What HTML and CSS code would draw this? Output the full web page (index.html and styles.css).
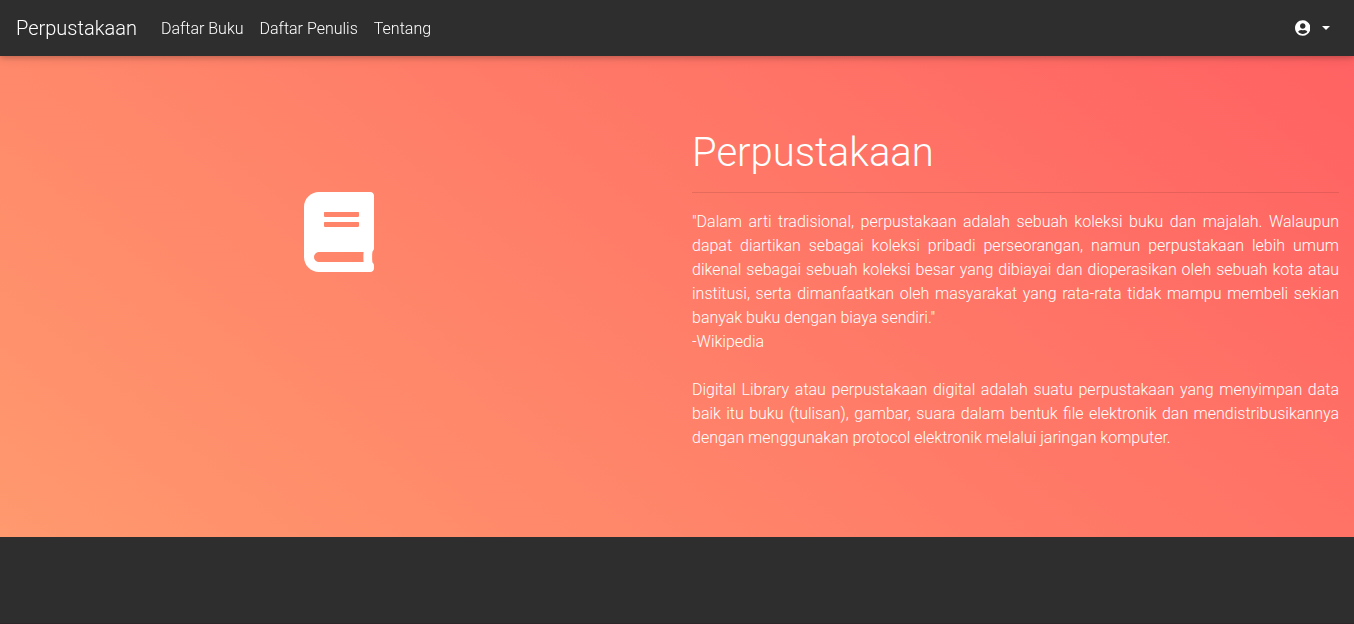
FILE: index.html
```html
<!DOCTYPE html>
<html lang="id">
<head>
<meta charset="utf-8">
<title>Perpustakaan</title>
<link rel="stylesheet" href="styles.css">
</head>
<body>
<nav class="navbar">
  <a class="brand" href="#">Perpustakaan</a>
  <div class="nav-links">
    <a class="nav-link" href="#">Daftar Buku</a>
    <a class="nav-link" href="#">Daftar Penulis</a>
    <a class="nav-link" href="#">Tentang</a>
  </div>
  <button class="account" type="button" aria-label="Akun">
    <svg class="user-icon" viewBox="0 0 496 512" aria-hidden="true"><path fill="currentColor" d="M248 8C111 8 0 119 0 256s111 248 248 248 248-111 248-248S385 8 248 8zm0 96c48.600 0 88 39.400 88 88s-39.400 88-88 88-88-39.400-88-88 39.400-88 88-88zm0 344c-58.700 0-111.300-26.600-146.500-68.200 18.800-35.400 55.600-59.800 98.500-59.800 2.400 0 4.800.4 7.100 1.100 13 4.200 26.600 6.900 40.900 6.900 14.300 0 28-2.700 40.900-6.900 2.300-.7 4.700-1.100 7.100-1.100 42.900 0 79.700 24.400 98.500 59.800C359.300 421.400 306.700 448 248 448z"/></svg>
    <span class="caret"></span>
  </button>
</nav>
<main class="hero">
  <div class="hero-art">
    <svg class="book-icon" viewBox="0 0 448 512" aria-hidden="true"><path fill="currentColor" d="M448 360V24c0-13.300-10.700-24-24-24H96C43 0 0 43 0 96v320c0 53 43 96 96 96h328c13.300 0 24-10.700 24-24v-16c0-7.500-3.500-14.300-8.900-18.700-4.200-15.400-4.200-59.300 0-74.700 5.400-4.300 8.900-11.100 8.900-18.600zM128 134c0-3.300 2.700-6 6-6h212c3.300 0 6 2.700 6 6v20c0 3.300-2.700 6-6 6H134c-3.300 0-6-2.700-6-6v-20zm0 64c0-3.300 2.700-6 6-6h212c3.300 0 6 2.700 6 6v20c0 3.300-2.700 6-6 6H134c-3.300 0-6-2.700-6-6v-20zm253.400 250H96c-17.700 0-32-14.300-32-32 0-17.600 14.400-32 32-32h285.400c-1.900 17.100-1.900 46.900 0 64z"/></svg>
  </div>
  <section class="hero-text">
    <h1 class="title">Perpustakaan</h1>
    <hr class="rule">
    <p class="copy">"Dalam arti tradisional, perpustakaan adalah sebuah koleksi buku dan majalah. Walaupun dapat diartikan sebagai koleksi pribadi perseorangan, namun perpustakaan lebih umum dikenal sebagai sebuah koleksi besar yang dibiayai dan dioperasikan oleh sebuah kota atau institusi, serta dimanfaatkan oleh masyarakat yang rata-rata tidak mampu membeli sekian banyak buku dengan biaya sendiri."<br>-Wikipedia<br><br>Digital Library atau perpustakaan digital adalah suatu perpustakaan yang menyimpan data baik itu buku (tulisan), gambar, suara dalam bentuk file elektronik dan mendistribusikannya dengan menggunakan protocol elektronik melalui jaringan komputer.</p>
  </section>
</main>
<footer class="footer"></footer>
</body>
</html>
```
FILE: styles.css
```css
* { box-sizing: border-box; }

body {
  display: flex;
  flex-direction: column;
  min-height: 100vh;
  margin: 0;
  background: #2e2e2e;
  color: #fff;
  font-family: Roboto, sans-serif;
  font-size: 16px;
  font-weight: 300;
  line-height: 24px;
}

.navbar {
  position: fixed;
  top: 0;
  right: 0;
  left: 0;
  display: flex;
  align-items: center;
  padding: 8px 16px;
  background: #2e2e2e;
  box-shadow: 0 2px 5px 0 rgba(0, 0, 0, .16), 0 2px 10px 0 rgba(0, 0, 0, .12);
}

.brand,
.nav-link {
  color: inherit;
  text-decoration: none;
}

.brand {
  margin-right: 16px;
  padding: 4px 0;
  font-size: 20px;
  line-height: 32px;
}

.nav-links { display: flex; }

.nav-link { padding: 9px 8px 7px; }

.account {
  display: flex;
  align-items: center;
  gap: 12px;
  margin-left: auto;
  padding: 8px;
  border: 0;
  background: none;
  color: inherit;
}

.user-icon {
  display: block;
  height: 16px;
}

.caret {
  border: 4px solid transparent;
  border-top-color: currentColor;
  border-bottom: 0;
}

.hero {
  display: grid;
  grid-template-columns: 1fr 1fr;
  align-items: start;
  padding: 129px 0 87px;
  background: linear-gradient(40deg, #ff996e, #ff6062);
}

.hero-art {
  display: flex;
  justify-content: center;
  padding-top: 63px;
}

.book-icon {
  display: block;
  height: 80px;
}

.hero-text { padding: 0 15px; }

.title {
  margin: 0 0 15px;
  font-size: 40px;
  font-weight: 300;
  line-height: 48px;
}

.rule {
  margin: 0 0 17px;
  border: 0;
  border-top: 1px solid rgba(0, 0, 0, .1);
}

.copy {
  margin: 0;
  text-align: justify;
}

.footer {
  flex: 1;
  border-bottom: 1px solid #2c262a;
}
```
